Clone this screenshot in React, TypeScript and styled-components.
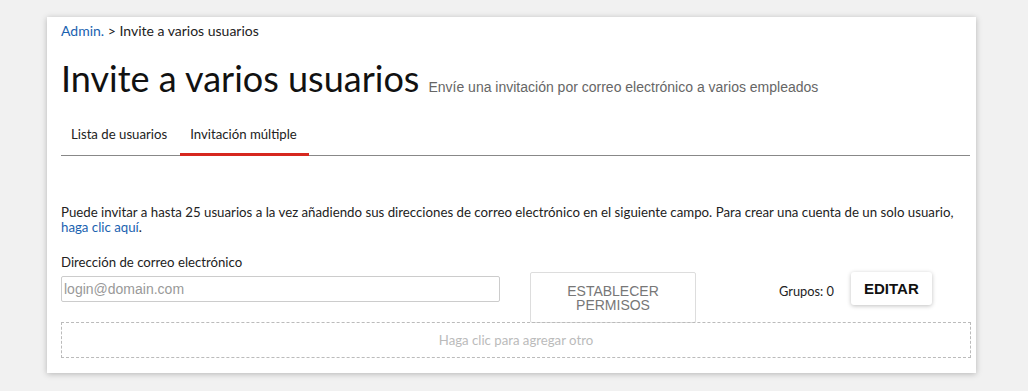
import React from 'react'
import styled, { createGlobalStyle } from 'styled-components'

const GlobalStyle = createGlobalStyle`
    html, body {
        margin: 0;
        padding: 0;
        background: #f1f1f1;
    }
    body {
        font-family: Lato, 'Noto Sans', sans-serif;
        color: #222;
    }
`

const Page = styled.div`
    box-sizing: border-box;
    width: 1028px;
    height: 391px;
    padding: 17px 52px 0 47px;
`

const Card = styled.div`
    box-sizing: border-box;
    width: 929px;
    height: 356px;
    background: #fff;
    box-shadow: 0 1px 6px rgba(0, 0, 0, 0.25);
    padding: 5px 6px 0 14px;
    display: flex;
    flex-direction: column;
`

const Crumbs = styled.div`
    font-size: 14px;
    line-height: 18px;
    color: #222;
`

const CrumbLink = styled.a`
    color: #1a62b0;
    text-decoration: none;
`

const TitleRow = styled.div`
    display: flex;
    align-items: baseline;
    gap: 9px;
    margin-top: 16px;
`

const Title = styled.h1`
    margin: 0;
    font-weight: 400;
    font-size: 36px;
    line-height: 44px;
    color: #111;
`

const Subtitle = styled.span`
    font-family: 'Liberation Sans', Arial, sans-serif;
    font-size: 14px;
    color: #666;
`

const Tabs = styled.div`
    display: flex;
    margin-top: 20px;
    border-bottom: 1px solid #888;
`

const Tab = styled.div<{ $active?: boolean }>`
    padding: 0 10px;
    height: 36px;
    line-height: 28px;
    font-size: 13.2px;
    color: #222;
    box-sizing: border-box;
    border-bottom: 3px solid ${(p) => (p.$active ? '#d6281f' : 'transparent')};
    margin-bottom: -1px;
    & + & {
        margin-left: 3px;
        padding-right: 12px;
    }
`

const Intro = styled.p`
    margin: 49px 0 0;
    font-size: 13.25px;
    line-height: 15px;
    color: #222;
    white-space: nowrap;
`

const IntroLink = styled.a`
    color: #1a62b0;
    text-decoration: none;
`

const Label = styled.div`
    margin-top: 18px;
    font-size: 13.2px;
    line-height: 18px;
    color: #222;
`

const FormRow = styled.div`
    display: flex;
    align-items: flex-start;
    margin-top: -6px;
`

const EmailInput = styled.input`
    box-sizing: border-box;
    width: 439px;
    height: 26px;
    margin-top: 11px;
    border: 1px solid #ccc;
    border-radius: 2px;
    padding: 0 2px;
    font-family: 'Liberation Sans', Arial, sans-serif;
    font-size: 14px;
    color: #333;
    outline: none;
    &::placeholder {
        color: #999;
    }
`

const PermButton = styled.button`
    box-sizing: border-box;
    width: 166px;
    height: 51px;
    margin-left: 30px;
    margin-top: 7px;
    background: #fff;
    border: 1px solid #ddd;
    border-radius: 2px;
    font-family: 'Liberation Sans', Arial, sans-serif;
    font-size: 14px;
    line-height: 14px;
    color: #777;
    padding: 0;
`

const Groups = styled.div`
    margin-left: 83px;
    margin-top: 19px;
    font-size: 12.8px;
    line-height: 14px;
    color: #222;
`

const EditButton = styled.button`
    box-sizing: border-box;
    width: 81px;
    height: 33px;
    margin-left: 17px;
    margin-top: 7px;
    background: #fff;
    border: none;
    border-radius: 3px;
    box-shadow: 0 1px 4px rgba(0, 0, 0, 0.25);
    font-family: 'Liberation Sans', Arial, sans-serif;
    font-weight: 700;
    font-size: 15px;
    color: #111;
`

const AddAnother = styled.div`
    box-sizing: border-box;
    width: 910px;
    height: 36px;
    margin-top: -1px;
    border: 1px dashed #bbb;
    display: flex;
    align-items: center;
    justify-content: center;
    font-size: 13.2px;
    color: #bbb;
`

export default function App() {
    return (
        <>
            <GlobalStyle />
            <Page>
                <Card>
                    <Crumbs>
                        <CrumbLink href='#'>Admin.</CrumbLink> &gt; Invite a varios usuarios
                    </Crumbs>
                    <TitleRow>
                        <Title>Invite a varios usuarios</Title>
                        <Subtitle>Envíe una invitación por correo electrónico a varios empleados</Subtitle>
                    </TitleRow>
                    <Tabs>
                        <Tab>Lista de usuarios</Tab>
                        <Tab $active>Invitación múltiple</Tab>
                    </Tabs>
                    <Intro>
                        Puede invitar a hasta 25 usuarios a la vez añadiendo sus direcciones de correo
                        electrónico en el siguiente campo. Para crear una cuenta de un solo usuario,
                        <br />
                        <IntroLink href='#'>haga clic aquí</IntroLink>.
                    </Intro>
                    <Label>Dirección de correo electrónico</Label>
                    <FormRow>
                        <EmailInput placeholder='login@domain.com' />
                        <PermButton>
                            ESTABLECER
                            <br />
                            PERMISOS
                        </PermButton>
                        <Groups>Grupos: 0</Groups>
                        <EditButton>EDITAR</EditButton>
                    </FormRow>
                    <AddAnother>Haga clic para agregar otro</AddAnother>
                </Card>
            </Page>
        </>
    )
}
